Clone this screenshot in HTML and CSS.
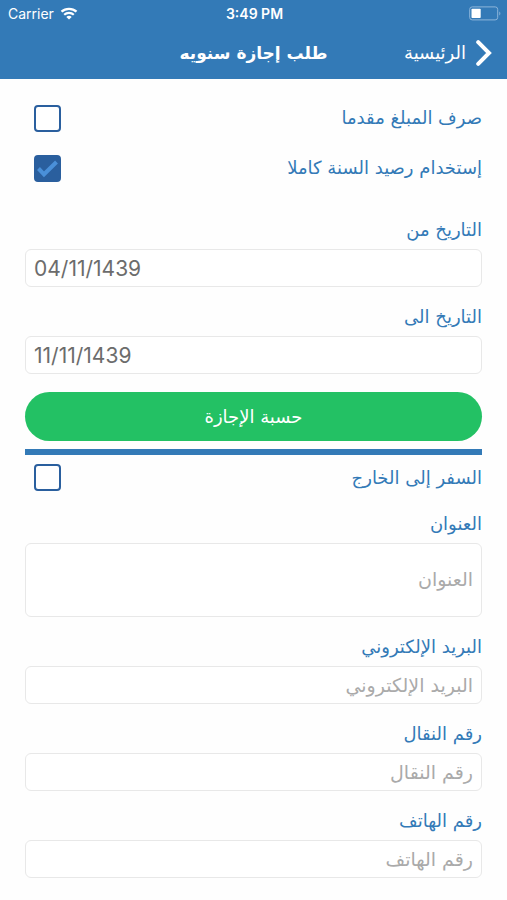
FILE: index.html
```html
<!DOCTYPE html>
<html lang="ar" dir="rtl">
<head>
<meta charset="utf-8">
<meta name="viewport" content="width=device-width, initial-scale=1">
<title>طلب إجازة سنويه</title>
<link rel="stylesheet" href="styles.css">
</head>
<body>
<header class="header">
  <div class="status" dir="ltr">
    <div class="carrier">
      <span>Carrier</span>
      <svg class="wifi" viewBox="0 0 18 13" width="18" height="13" aria-hidden="true">
        <path d="M1.5 4.7C5.7.8 12.3.8 16.5 4.7" fill="none" stroke="#fff" stroke-width="2.300"/>
        <path d="M4.2 7.7c2.7-2.5 6.900-2.500 9.600 0" fill="none" stroke="#fff" stroke-width="2.200"/>
        <path d="M9 12.500 6.300 9.900c1.500-1.400 3.900-1.400 5.400 0z" fill="#fff"/>
      </svg>
    </div>
    <span class="time">3:49 PM</span>
    <svg class="battery" viewBox="0 0 32 15" width="32" height="15" aria-hidden="true">
      <rect x=".7" y=".9" width="28" height="13" rx="2.500" fill="none" stroke="#8db5da"/>
      <rect x="2.500" y="2.800" width="9.200" height="9.200" rx=".8" fill="#fff"/>
      <path d="M30.300 5.400c1.400.8 1.400 3.200 0 4z" fill="#8db5da"/>
    </svg>
  </div>
  <nav class="nav">
    <a class="back" href="#">
      <svg viewBox="0 0 16 26" width="16" height="26" aria-hidden="true">
        <path d="M2.200 2.200 13 13 2.200 23.800" fill="none" stroke="#fff" stroke-width="4" stroke-linecap="round"/>
      </svg>
      <span>الرئيسية</span>
    </a>
    <h1 class="title">طلب إجازة سنويه</h1>
  </nav>
</header>
<form class="form">
  <div class="check-row">
    <label for="advance">صرف المبلغ مقدما</label>
    <input class="check" type="checkbox" id="advance">
  </div>
  <div class="check-row">
    <label for="balance">إستخدام رصيد السنة كاملا</label>
    <span class="check-wrap">
      <input class="check" type="checkbox" id="balance" checked>
      <svg class="tick" viewBox="0 0 27 27" width="27" height="27" aria-hidden="true">
        <path d="M4.500 13.500 10 19.300 22.500 7" fill="none" stroke="#4a90d9" stroke-width="4"/>
      </svg>
    </span>
  </div>
  <div class="fields dates">
    <div class="field">
      <label for="from">التاريخ من</label>
      <input class="date" type="text" id="from" dir="ltr" value="04/11/1439">
    </div>
    <div class="field">
      <label for="to">التاريخ الى</label>
      <input class="date" type="text" id="to" dir="ltr" value="11/11/1439">
    </div>
  </div>
  <button class="submit" type="button">حسبة الإجازة</button>
  <hr class="divider">
  <div class="check-row compact">
    <label for="abroad">السفر إلى الخارج</label>
    <input class="check" type="checkbox" id="abroad">
  </div>
  <div class="fields contact">
    <div class="field">
      <label for="address">العنوان</label>
      <textarea id="address" rows="1" placeholder="العنوان"></textarea>
    </div>
    <div class="field">
      <label for="email">البريد الإلكتروني</label>
      <input type="email" id="email" placeholder="البريد الإلكتروني">
    </div>
    <div class="field">
      <label for="mobile">رقم النقال</label>
      <input type="tel" id="mobile" dir="rtl" placeholder="رقم النقال">
    </div>
    <div class="field">
      <label for="phone">رقم الهاتف</label>
      <input type="tel" id="phone" dir="rtl" placeholder="رقم الهاتف">
    </div>
  </div>
</form>
</body>
</html>
```
FILE: styles.css
```css
* {
  box-sizing: border-box;
}

body {
  margin: 0;
  background: #fefefe;
  color: #337ab7;
  font-family: "DejaVu Sans", sans-serif;
  font-size: 18px;
  line-height: 26px;
}

.header {
  background: #337ab7;
  color: #fff;
}

.status {
  display: grid;
  grid-template-columns: 1fr auto 1fr;
  align-items: center;
  height: 27px;
  padding: 0 6px 0 8px;
  font-family: Inter, sans-serif;
  font-size: 14px;
}

.carrier {
  display: flex;
  align-items: center;
  gap: 6px;
}

.time {
  font-weight: 600;
}

.battery {
  justify-self: end;
}

.nav {
  display: grid;
  grid-template-columns: 1fr auto 1fr;
  align-items: center;
  height: 52px;
  padding: 0 15px;
}

.back {
  display: flex;
  align-items: center;
  gap: 10px;
  color: inherit;
  text-decoration: none;
}

.title {
  margin: 0;
  font-size: 17px;
  font-weight: bold;
}

.form {
  padding: 14px 25px 22px;
}

.check-row {
  display: flex;
  align-items: center;
  justify-content: space-between;
  height: 50px;
  padding-left: 9px;
}

.compact {
  height: 45px;
}

.check {
  display: block;
  appearance: none;
  width: 27px;
  height: 27px;
  margin: 0;
  border: 2px solid #2a5f9e;
  border-radius: 4px;
  background: #fff;
}

.check:checked {
  background: #2a5f9e;
}

.check-wrap {
  position: relative;
}

.tick {
  position: absolute;
  inset: 0;
  pointer-events: none;
}

.check:not(:checked) + .tick {
  display: none;
}

.fields {
  display: flex;
  flex-direction: column;
  gap: 17px;
}

.dates {
  margin-top: 24px;
}

.contact {
  margin-top: 11px;
}

.field {
  display: flex;
  flex-direction: column;
  gap: 6px;
}

.field input,
.field textarea {
  display: block;
  width: 100%;
  height: 38px;
  margin: 0;
  padding: 0 8px;
  border: 1px solid #e8e8e8;
  border-radius: 6px;
  background: #fff;
  color: #6c6c6c;
  font-family: "DejaVu Sans", sans-serif;
  font-size: 19px;
  line-height: 34px;
}

.field textarea {
  height: 74px;
  padding: 18px 8px;
  resize: none;
}

.field .date {
  font-family: Inter, sans-serif;
  font-size: 21px;
}

.field ::placeholder {
  color: #aaa;
  opacity: 1;
}

.field input::placeholder {
  overflow: visible;
  padding: 4px 0;
}

.submit {
  display: block;
  width: 100%;
  height: 49px;
  margin: 18px 0 8px;
  border: 0;
  border-radius: 25px;
  background: #23c164;
  color: #fff;
  font-family: inherit;
  font-size: 18px;
}

.divider {
  height: 6px;
  margin: 0;
  border: 0;
  background: #337ab7;
}
```
